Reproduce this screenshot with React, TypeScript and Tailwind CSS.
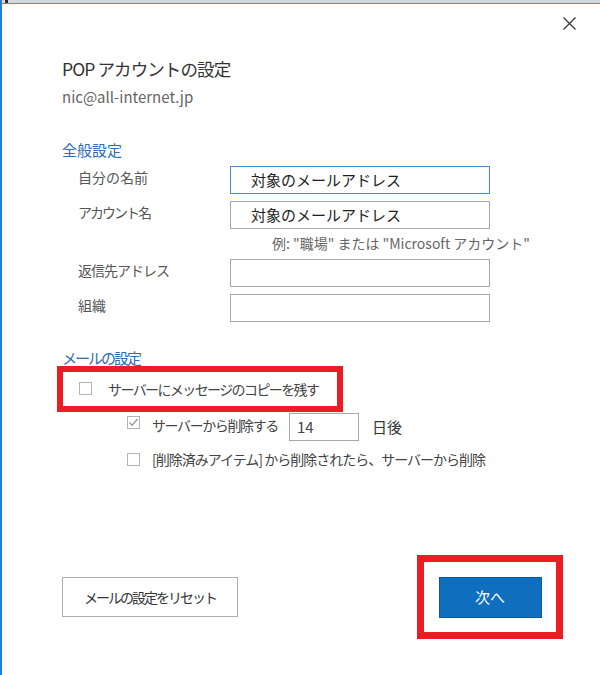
import React from "react";

const font = { fontFamily: '"Noto Sans CJK JP", "Noto Sans", sans-serif' };

function Box({ checked = false }: { checked?: boolean }) {
  return (
    <span className="flex h-[13px] w-[13px] shrink-0 items-center justify-center border border-[#b4b4b4] bg-white">
      {checked && (
        <svg width="11" height="11" viewBox="0 0 11 11" fill="none">
          <path d="M1.5 5.5 L4.2 8.3 L9.5 2" stroke="#9a9a9a" strokeWidth="1.4" />
        </svg>
      )}
    </span>
  );
}

function Field({
  label,
  value = "",
  focused = false,
  labelClass = "",
}: {
  label: string;
  value?: string;
  focused?: boolean;
  labelClass?: string;
}) {
  return (
    <div className="flex items-start">
      <div className={`w-[168px] pl-4 pt-[1px] text-[14px] leading-5 text-[#555] ${labelClass}`}>{label}</div>
      <div
        className={`flex h-[28px] w-[260px] items-center pl-[20px] text-[15px] text-[#1e1e1e] ${
          focused ? "border border-[#3b8fdc]" : "border border-[#a9a9a9]"
        }`}
      >
        {value}
      </div>
    </div>
  );
}

export default function App() {
  return (
    <div style={font} className="relative h-[675px] w-[600px] overflow-hidden border-l-2 border-[#1f7fd8] bg-white">
      {/* window chrome strip */}
      <div className="relative h-[3px] bg-[#d6d6d6]">
        <div className="absolute left-[3px] top-0 h-[3px] w-[3px] bg-[#3a2a10]" />
      </div>
      <div className="h-px bg-[#4a93dc]" />

      <button className="absolute right-[24px] top-[17px] p-0">
        <svg width="13" height="13" viewBox="0 0 13 13" fill="none">
          <path d="M0.5 0.5 L12.5 12.5 M12.5 0.5 L0.5 12.5" stroke="#333" strokeWidth="1.2" />
        </svg>
      </button>

      <div className="pl-[60px]">
        <div className="mt-[53px] text-[17.5px] leading-6 tracking-[-0.9px] text-[#333]">POP アカウントの設定</div>
        <div className="mt-[6px] text-[15px] leading-5 text-[#666]">nic@all-internet.jp</div>

        <div className="mt-[33px] text-[15px] leading-5 text-[#2a6db8]">全般設定</div>

        <div className="mt-[6px] flex flex-col">
          <Field label="自分の名前" value="対象のメールアドレス" focused />
          <div className="mt-[7px]">
            <Field label="アカウント名" value="対象のメールアドレス" labelClass="tracking-[-2px]" />
          </div>
          <div className="mt-[5px] h-[18px] pl-[210px] text-[14px] leading-[18px] text-[#666]">
            例: "職場" または "Microsoft アカウント"
          </div>
          <div className="mt-[7px]">
            <Field label="返信先アドレス" labelClass="tracking-[-1px]" />
          </div>
          <div className="mt-[7px]">
            <Field label="組織" />
          </div>
        </div>

        <div className="mt-[27px] h-[17px] text-[15px] leading-[17px] tracking-[-2px] text-[#2a6db8]">メールの設定</div>

        <div className="-ml-[5px] flex h-[46px] w-[286px] items-center gap-[16px] border-[6px] border-[#ec1c24] pl-[16px]">
          <span className="-mt-[2px]">
            <Box />
          </span>
          <span className="text-[14px] tracking-[-1.6px] text-[#444]">サーバーにメッセージのコピーを残す</span>
        </div>

        <div className="mt-[1px] flex items-center pl-[65px]">
          <span className="-mt-[10px]">
            <Box checked />
          </span>
          <span className="-mt-[4px] ml-[12px] w-[137px] text-[14px] tracking-[-1.4px] text-[#444]">サーバーから削除する</span>
          <div className="flex h-[28px] w-[70px] items-center border border-[#a9a9a9] pl-[7px] text-[15px] text-[#444]">14</div>
          <span className="ml-[13px] text-[15px] text-[#333]">日後</span>
        </div>

        <div className="mt-[8px] flex h-[20px] items-center pl-[65px]">
          <Box />
          <span className="ml-[12px] text-[14px] tracking-[-1px] text-[#444]">
            [削除済みアイテム] から削除されたら、サーバーから削除
          </span>
        </div>

        <div className="mt-[86px] flex w-[501px] items-center justify-between">
          <button className="flex h-[40px] w-[176px] items-center justify-center border border-[#adadad] bg-white text-[14px] tracking-[-2px] text-[#333]">
            メールの設定をリセット
          </button>
          <div className="flex h-[84px] w-[146px] items-center justify-center border-[7px] border-[#ec1c24]">
            <button className="flex h-[41px] w-[103px] items-center justify-center border border-[#0b5aa3] bg-[#106ebe] text-[15px] text-white">
              次へ
            </button>
          </div>
        </div>
      </div>
    </div>
  );
}
